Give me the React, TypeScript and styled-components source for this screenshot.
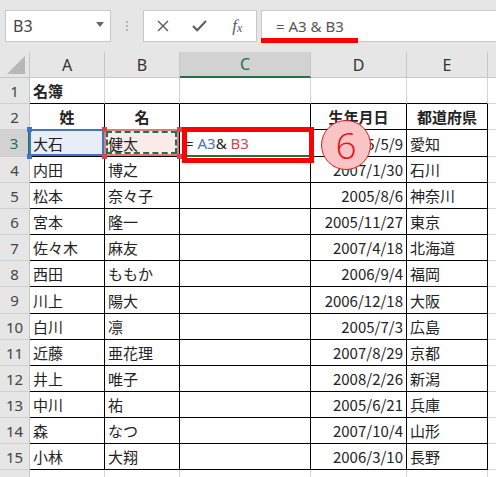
import React from 'react';
import styled, { createGlobalStyle } from 'styled-components';

const JP = `"Noto Sans CJK JP", "Noto Sans", sans-serif`;
const UI = `"Noto Sans", "Liberation Sans", sans-serif`;
const GREEN = '#217346';
const COLS = '30px 75px 75px 131px 96px 81px 60px';

const GlobalStyle = createGlobalStyle`
  html, body { margin: 0; padding: 0; background: #fff; }
  body { font-family: ${JP}; width: 496px; height: 477px; overflow: hidden; }
`;

const Page = styled.div`
  position: relative;
  width: 496px;
  height: 477px;
  overflow: hidden;
  background: #fff;
`;

const FormulaBar = styled.div`
  box-sizing: border-box;
  height: 52px;
  background: #e6e6e6;
  display: flex;
  align-items: flex-start;
  padding: 10px 0 0 5px;
  & > * {
    flex-shrink: 0;
  }
`;

const NameBox = styled.div`
  box-sizing: border-box;
  width: 106px;
  height: 32px;
  background: #fff;
  border: 1px solid #c8c8c8;
  display: flex;
  align-items: center;
  justify-content: space-between;
  padding: 0 6px 0 7px;
  font-family: ${UI};
  font-size: 16px;
  color: #444;
`;

const DropArrow = styled.span`
  width: 0;
  height: 0;
  border-left: 4px solid transparent;
  border-right: 4px solid transparent;
  border-top: 5px solid #666;
  margin-top: -4px;
`;

const Grip = styled.div`
  width: 32px;
  height: 32px;
  display: flex;
  flex-direction: column;
  align-items: center;
  justify-content: center;
  gap: 2px;
  & > span {
    width: 2px;
    height: 2px;
    background: #b4b4b4;
  }
`;

const ButtonBox = styled.div`
  box-sizing: border-box;
  width: 114px;
  height: 32px;
  background: #fff;
  border: 1px solid #c8c8c8;
  display: flex;
  align-items: center;
  margin-right: 4px;
`;

const BarButton = styled.span`
  flex: 1;
  display: flex;
  align-items: center;
  justify-content: center;
  color: #5a5a5a;
`;

const Fx = styled.span`
  font-family: "Liberation Serif", serif;
  font-style: italic;
  font-size: 17px;
  color: #5a5a5a;
  & > sub {
    font-size: 12px;
    vertical-align: -1px;
  }
`;

const FormulaInput = styled.div`
  box-sizing: border-box;
  width: 250px;
  height: 32px;
  background: #fff;
  border: 1px solid #c8c8c8;
  display: flex;
  align-items: center;
  padding-left: 14px;
  font-family: ${UI};
  font-size: 15px;
  color: #555;
  white-space: pre;
`;

const Sheet = styled.div`
  display: flex;
  flex-direction: column;
`;

const SheetRow = styled.div<{ $h: number }>`
  display: grid;
  grid-template-columns: ${COLS};
  height: ${(p) => p.$h}px;
`;

const Corner = styled.div`
  box-sizing: border-box;
  background: #e6e6e6;
  border-right: 1px solid #c6c6c6;
  border-bottom: 1px solid #c6c6c6;
  display: flex;
  align-items: flex-end;
  justify-content: flex-end;
  padding: 0 4px 3px 0;
  &::after {
    content: '';
    width: 0;
    height: 0;
    border-left: 18px solid transparent;
    border-bottom: 18px solid #b7b7b7;
  }
`;

const ColHead = styled.div<{ $sel?: boolean }>`
  box-sizing: border-box;
  background: ${(p) => (p.$sel ? '#d2d2d2' : '#e6e6e6')};
  border-right: 1px solid #c6c6c6;
  border-bottom: ${(p) => (p.$sel ? `2px solid ${GREEN}` : '1px solid #c6c6c6')};
  display: flex;
  align-items: center;
  justify-content: center;
  font-family: ${UI};
  font-size: 16px;
  color: ${(p) => (p.$sel ? GREEN : '#333')};
`;

const RowHead = styled.div<{ $sel?: boolean }>`
  box-sizing: border-box;
  background: ${(p) => (p.$sel ? '#d2d2d2' : '#e6e6e6')};
  border-right: ${(p) => (p.$sel ? `2px solid ${GREEN}` : '1px solid #c6c6c6')};
  border-bottom: 1px solid #d0d0d0;
  display: flex;
  align-items: center;
  justify-content: center;
  font-family: ${UI};
  font-size: 15px;
  color: ${(p) => (p.$sel ? GREEN : '#444')};
`;

type Align = 'left' | 'center' | 'right';

const Cell = styled.div<{
  $rb?: boolean;
  $bb?: boolean;
  $align?: Align;
  $bold?: boolean;
  $fill?: string;
  $activeBottom?: boolean;
  $pl?: number;
}>`
  box-sizing: border-box;
  position: relative;
  display: flex;
  align-items: center;
  justify-content: ${(p) =>
    p.$align === 'center' ? 'center' : p.$align === 'right' ? 'flex-end' : 'flex-start'};
  padding: 0 3px 0 ${(p) => p.$pl ?? 3}px;
  background: ${(p) => p.$fill ?? '#fff'};
  border-right: 1px solid ${(p) => (p.$rb ? '#000' : '#d4d4d4')};
  border-bottom: ${(p) =>
    p.$activeBottom ? `2px solid ${GREEN}` : `1px solid ${p.$bb ? '#000' : '#d4d4d4'}`};
  font-size: 15px;
  font-weight: ${(p) => (p.$bold ? 700 : 400)};
  color: #222;
  white-space: nowrap;
`;

const RefFrame = styled.span<{ $color: string; $dashed?: string }>`
  position: absolute;
  inset: -1px 0 0 -1px;
  border: 2px solid ${(p) => p.$color};
  pointer-events: none;
  z-index: 1;
  &::after {
    content: '';
    display: ${(p) => (p.$dashed ? 'block' : 'none')};
    position: absolute;
    inset: 0;
    border: 2px dashed ${(p) => p.$dashed};
  }
`;

const Handle = styled.span<{ $x: 'l' | 'r'; $y: 't' | 'b'; $color: string }>`
  position: absolute;
  width: 5px;
  height: 5px;
  background: ${(p) => p.$color};
  z-index: 3;
  ${(p) => (p.$x === 'l' ? 'left: -3px;' : 'right: -3px;')}
  ${(p) => (p.$y === 't' ? 'top: -3px;' : 'bottom: -3px;')}
`;

const FormulaText = styled.span`
  font-family: ${UI};
  font-size: 15px;
  color: #222;
  white-space: pre;
`;

const RefText = styled.span<{ $color: string }>`
  color: ${(p) => p.$color};
`;

const RedBox = styled.div`
  position: absolute;
  left: 182px;
  top: 127px;
  width: 132px;
  height: 36px;
  box-sizing: border-box;
  border: 5px solid #ff0000;
  z-index: 5;
`;

const RedUnderline = styled.div`
  position: absolute;
  left: 261px;
  top: 38px;
  width: 97px;
  height: 5px;
  background: #ff0000;
  z-index: 5;
`;

const StepBadge = styled.div`
  position: absolute;
  left: 321px;
  top: 120px;
  width: 50px;
  height: 50px;
  box-sizing: border-box;
  border-radius: 50%;
  border: 1.5px solid #e8141b;
  background: #f8c4c4;
  display: flex;
  align-items: center;
  justify-content: center;
  font-family: "Open Sans", ${UI};
  font-weight: 300;
  font-size: 37px;
  line-height: 1;
  color: #e8141b;
  z-index: 5;
  padding-bottom: 2px;
`;

type DataRow = { n: number; h: number; cells: string[] };

const data: DataRow[] = [
  { n: 1, h: 26, cells: ['名簿', '', '', '', ''] },
  { n: 2, h: 26, cells: ['姓', '名', '', '生年月日', '都道府県'] },
  { n: 3, h: 27, cells: ['大石', '健太', '', '2005/5/9', '愛知'] },
  { n: 4, h: 26, cells: ['内田', '博之', '', '2007/1/30', '石川'] },
  { n: 5, h: 26, cells: ['松本', '奈々子', '', '2005/8/6', '神奈川'] },
  { n: 6, h: 26, cells: ['宮本', '隆一', '', '2005/11/27', '東京'] },
  { n: 7, h: 26, cells: ['佐々木', '麻友', '', '2007/4/18', '北海道'] },
  { n: 8, h: 26, cells: ['西田', 'ももか', '', '2006/9/4', '福岡'] },
  { n: 9, h: 27, cells: ['川上', '陽大', '', '2006/12/18', '大阪'] },
  { n: 10, h: 26, cells: ['白川', '凛', '', '2005/7/3', '広島'] },
  { n: 11, h: 26, cells: ['近藤', '亜花理', '', '2007/8/29', '京都'] },
  { n: 12, h: 26, cells: ['井上', '唯子', '', '2008/2/26', '新潟'] },
  { n: 13, h: 26, cells: ['中川', '祐', '', '2005/6/21', '兵庫'] },
  { n: 14, h: 26, cells: ['森', 'なつ', '', '2007/10/4', '山形'] },
  { n: 15, h: 26, cells: ['小林', '大翔', '', '2006/3/10', '長野'] },
  { n: 16, h: 26, cells: ['', '', '', '', ''] },
];

const CrossIcon = () => (
  <svg width="12" height="12" viewBox="0 0 12 12">
    <path d="M1 1 L11 11 M11 1 L1 11" stroke="#5a5a5a" strokeWidth="1.4" fill="none" />
  </svg>
);

const CheckIcon = () => (
  <svg width="15" height="12" viewBox="0 0 15 12">
    <path d="M1 6 L5.2 10.2 L14 1" stroke="#5a5a5a" strokeWidth="2" fill="none" />
  </svg>
);

function renderCell(row: DataRow, col: number) {
  const text = row.cells[col];
  const inTable = row.n >= 2 && row.n <= 15;
  const rb = inTable;
  const bb = row.n >= 1 && row.n <= 15;
  const key = `${row.n}-${col}`;

  if (row.n === 3 && col === 0) {
    return (
      <Cell key={key} $rb={rb} $bb={bb} $fill="#e8eef8">
        {text}
        <RefFrame $color="#4472c4" />
        <Handle $x="l" $y="t" $color="#4472c4" />
        <Handle $x="l" $y="b" $color="#4472c4" />
      </Cell>
    );
  }
  if (row.n === 3 && col === 1) {
    return (
      <Cell key={key} $rb={rb} $bb={bb} $fill="#fbeaea">
        {text}
        <RefFrame $color="#e07b7b" $dashed={GREEN} />
        <Handle $x="l" $y="t" $color="#d0464f" />
        <Handle $x="r" $y="t" $color="#d0464f" />
        <Handle $x="l" $y="b" $color="#d0464f" />
        <Handle $x="r" $y="b" $color="#d0464f" />
      </Cell>
    );
  }
  if (row.n === 3 && col === 2) {
    return (
      <Cell key={key} $rb={rb} $bb={bb} $activeBottom $pl={5}>
        <FormulaText>
          {'= '}
          <RefText $color="#4472c4">A3</RefText>
          {'& '}
          <RefText $color="#d0464f">B3</RefText>
        </FormulaText>
      </Cell>
    );
  }

  const align: Align = row.n === 2 ? 'center' : col === 3 ? 'right' : 'left';
  return (
    <Cell key={key} $rb={rb} $bb={bb} $align={align} $bold={row.n <= 2}>
      {text}
    </Cell>
  );
}

export default function App() {
  return (
    <Page>
      <GlobalStyle />
      <FormulaBar>
        <NameBox>
          B3
          <DropArrow />
        </NameBox>
        <Grip>
          <span />
          <span />
          <span />
        </Grip>
        <ButtonBox>
          <BarButton>
            <CrossIcon />
          </BarButton>
          <BarButton>
            <CheckIcon />
          </BarButton>
          <BarButton>
            <Fx>
              f<sub>x</sub>
            </Fx>
          </BarButton>
        </ButtonBox>
        <FormulaInput>{'= A3 & B3'}</FormulaInput>
      </FormulaBar>
      <Sheet>
        <SheetRow $h={26}>
          <Corner />
          {['A', 'B', 'C', 'D', 'E', 'F'].map((c) => (
            <ColHead key={c} $sel={c === 'C'}>
              {c === 'F' ? '' : c}
            </ColHead>
          ))}
        </SheetRow>
        {data.map((row) => (
          <SheetRow key={row.n} $h={row.h}>
            <RowHead $sel={row.n === 3}>{row.n <= 15 ? row.n : ''}</RowHead>
            {[0, 1, 2, 3, 4].map((c) => renderCell(row, c))}
            <Cell $bb={false} />
          </SheetRow>
        ))}
      </Sheet>
      <RedUnderline />
      <RedBox />
      <StepBadge>6</StepBadge>
    </Page>
  );
}
